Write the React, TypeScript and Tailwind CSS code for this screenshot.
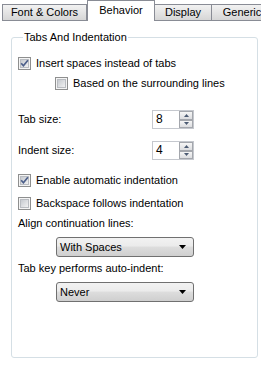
import React from "react";

// caixa de seleção estilo Windows 7
function CheckBox({ checked }: { checked?: boolean }) {
  return (
    <svg width="13" height="13" viewBox="0 0 13 13" className="shrink-0">
      <defs>
        <linearGradient id="cbFill" x1="0" y1="0" x2="1" y2="1">
          <stop offset="0" stopColor="#c3c7cd" />
          <stop offset="1" stopColor="#f4f4f4" />
        </linearGradient>
      </defs>
      <rect x="0.5" y="0.5" width="12" height="12" fill="#f4f4f4" stroke="#8e8f8f" />
      <rect x="2.5" y="2.5" width="8" height="8" fill="url(#cbFill)" stroke="#b9bcc1" />
      {checked && (
        <path d="M3.2 6.3 L5.4 8.8 L9.9 3.2" fill="none" stroke="#4c5f8a" strokeWidth="1.7" />
      )}
    </svg>
  );
}

function CheckRow({ label, checked, indent, className }: { label: string; checked?: boolean; indent?: boolean; className: string }) {
  return (
    <div className={`flex h-[13px] items-center gap-[5px] ${indent ? "ml-[37px]" : ""} ${className}`}>
      <CheckBox checked={checked} />
      <span className="leading-[13px]">{label}</span>
    </div>
  );
}

function SpinButton({ up }: { up?: boolean }) {
  return (
    <div className="flex flex-1 items-center justify-center border border-[#a4a7ad] bg-gradient-to-b from-[#f6f6f6] to-[#dcdde0]">
      <svg width="5" height="3" viewBox="0 0 5 3">
        <path d={up ? "M0 3 L2.5 0 L5 3 Z" : "M0 0 L5 0 L2.5 3 Z"} fill="#4b5a72" />
      </svg>
    </div>
  );
}

function SpinRow({ label, value, className }: { label: string; value: string; className: string }) {
  return (
    <div className={`flex h-[19px] items-center ${className}`}>
      <span className="w-[134px] leading-[13px]">{label}</span>
      <div className="flex h-[19px] w-[42px] border border-[#c5c8ce] bg-white">
        <span className="flex-1 pl-[3px] text-[12px] leading-[17px]">{value}</span>
        <div className="flex w-[14px] flex-col">
          <SpinButton up />
          <SpinButton />
        </div>
      </div>
    </div>
  );
}

function Combo({ value, className }: { value: string; className: string }) {
  return (
    <div
      className={`ml-[38px] flex h-[20px] w-[138px] items-center justify-between rounded-[3px] border border-[#707070] bg-[linear-gradient(#f2f2f2,#ebebeb_45%,#dddddd_50%,#cfcfcf)] pl-[3px] pr-[7px] ${className}`}
    >
      <span className="leading-[13px]">{value}</span>
      <svg width="7" height="4" viewBox="0 0 7 4">
        <path d="M0 0 H7 L3.5 4 Z" fill="#000" />
      </svg>
    </div>
  );
}

export default function App() {
  const tabs = [
    { nome: "Font & Colors", w: "w-[85px]" },
    { nome: "Behavior", w: "w-[68px]", ativo: true },
    { nome: "Display", w: "w-[58px]" },
    { nome: "Generic", w: "w-[62px]" },
  ];

  return (
    <div className="h-[365px] w-[261px] overflow-hidden bg-white font-['Liberation_Sans',Arial,sans-serif] text-[11px] text-black">
      {/* barra de abas */}
      <div className="flex h-[21px] items-end pl-[2px]">
        {tabs.map((t) =>
          t.ativo ? (
            <div
              key={t.nome}
              className={`${t.w} flex h-[21px] shrink-0 justify-center border border-b-0 border-[#898c95] bg-white pt-[3px] leading-[13px]`}
            >
              {t.nome}
            </div>
          ) : (
            <div
              key={t.nome}
              className={`${t.w} -ml-px flex h-[17px] shrink-0 justify-center border border-[#898c95] bg-gradient-to-b from-[#f2f2f2] to-[#d6d6d6] pt-[1px] leading-[13px] first:ml-0`}
            >
              {t.nome}
            </div>
          )
        )}
      </div>

      {/* grupo */}
      <fieldset className="ml-[11px] mt-[10px] h-[327px] w-[247px] rounded-[3px] border border-[#d5dfe5] pl-[6px]">
        <legend className="ml-[5px] px-[1px] leading-[13px]">Tabs And Indentation</legend>
        <CheckRow className="mt-[13px]" label="Insert spaces instead of tabs" checked />
        <CheckRow className="mt-[7px]" label="Based on the surrounding lines" indent />
        <SpinRow className="mt-[20px]" label="Tab size:" value="8" />
        <SpinRow className="mt-[12px]" label="Indent size:" value="4" />
        <CheckRow className="mt-[14px]" label="Enable automatic indentation" checked />
        <CheckRow className="mt-[10px]" label="Backspace follows indentation" />
        <div className="mt-[7px] leading-[13px]">Align continuation lines:</div>
        <Combo className="mt-[7px]" value="With Spaces" />
        <div className="mt-[5px] leading-[13px]">Tab key performs auto-indent:</div>
        <Combo className="mt-[7px]" value="Never" />
      </fieldset>
    </div>
  );
}
